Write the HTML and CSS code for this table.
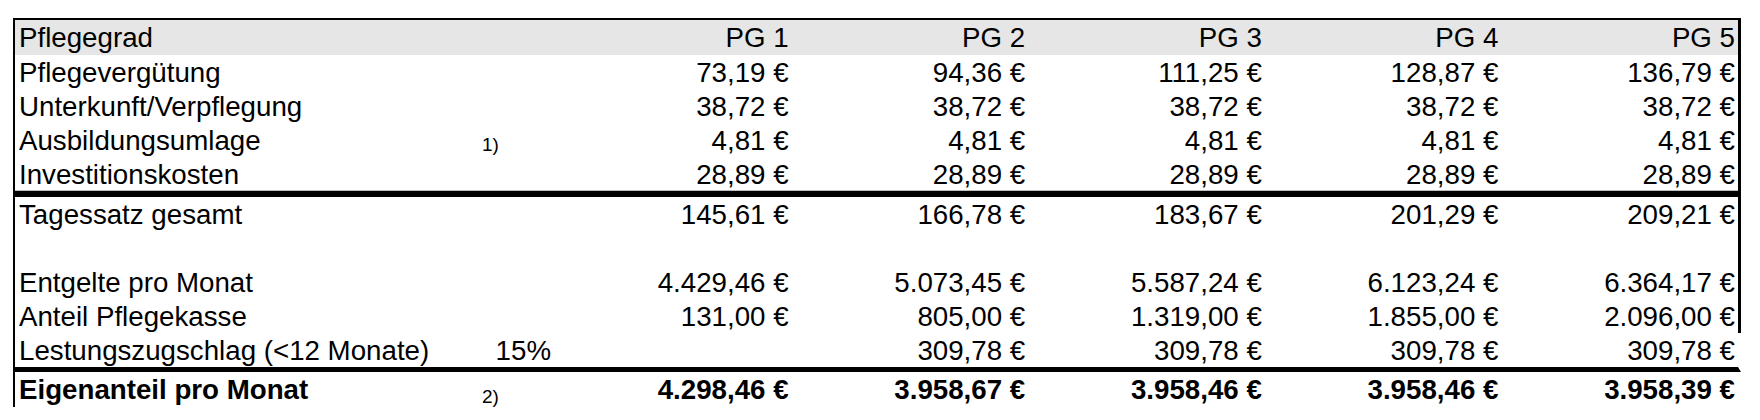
FILE: index.html
```html
<!DOCTYPE html>
<html lang="de">
<head>
<meta charset="utf-8">
<title>Pflegegrad Kosten</title>
<link rel="stylesheet" href="styles.css">
</head>
<body>
<div class="sheet">
  <div class="row head">
    <div class="label">Pflegegrad</div><div class="note"></div>
    <div class="num">PG 1</div><div class="num">PG 2</div><div class="num">PG 3</div><div class="num">PG 4</div><div class="num">PG 5</div>
  </div>
  <div class="row">
    <div class="label">Pflegevergütung</div><div class="note"></div>
    <div class="num">73,19&nbsp;€</div><div class="num">94,36&nbsp;€</div><div class="num">111,25&nbsp;€</div><div class="num">128,87&nbsp;€</div><div class="num">136,79&nbsp;€</div>
  </div>
  <div class="row">
    <div class="label">Unterkunft/Verpflegung</div><div class="note"></div>
    <div class="num">38,72&nbsp;€</div><div class="num">38,72&nbsp;€</div><div class="num">38,72&nbsp;€</div><div class="num">38,72&nbsp;€</div><div class="num">38,72&nbsp;€</div>
  </div>
  <div class="row">
    <div class="label">Ausbildungsumlage</div><div class="note small">1)</div>
    <div class="num">4,81&nbsp;€</div><div class="num">4,81&nbsp;€</div><div class="num">4,81&nbsp;€</div><div class="num">4,81&nbsp;€</div><div class="num">4,81&nbsp;€</div>
  </div>
  <div class="row thick">
    <div class="label">Investitionskosten</div><div class="note"></div>
    <div class="num">28,89&nbsp;€</div><div class="num">28,89&nbsp;€</div><div class="num">28,89&nbsp;€</div><div class="num">28,89&nbsp;€</div><div class="num">28,89&nbsp;€</div>
  </div>
  <div class="row">
    <div class="label">Tagessatz gesamt</div><div class="note"></div>
    <div class="num">145,61&nbsp;€</div><div class="num">166,78&nbsp;€</div><div class="num">183,67&nbsp;€</div><div class="num">201,29&nbsp;€</div><div class="num">209,21&nbsp;€</div>
  </div>
  <div class="row">
    <div class="label"></div><div class="note"></div>
    <div class="num"></div><div class="num"></div><div class="num"></div><div class="num"></div><div class="num"></div>
  </div>
  <div class="row">
    <div class="label">Entgelte pro Monat</div><div class="note"></div>
    <div class="num">4.429,46&nbsp;€</div><div class="num">5.073,45&nbsp;€</div><div class="num">5.587,24&nbsp;€</div><div class="num">6.123,24&nbsp;€</div><div class="num">6.364,17&nbsp;€</div>
  </div>
  <div class="row">
    <div class="label">Anteil Pflegekasse</div><div class="note"></div>
    <div class="num">131,00&nbsp;€</div><div class="num">805,00&nbsp;€</div><div class="num">1.319,00&nbsp;€</div><div class="num">1.855,00&nbsp;€</div><div class="num">2.096,00&nbsp;€</div>
  </div>
  <div class="row open thin-bottom">
    <div class="label">Lestungszugschlag (&lt;12 Monate)</div><div class="note pct">15%</div>
    <div class="num"></div><div class="num">309,78&nbsp;€</div><div class="num">309,78&nbsp;€</div><div class="num">309,78&nbsp;€</div><div class="num">309,78&nbsp;€</div>
  </div>
  <div class="row open total">
    <div class="label">Eigenanteil pro Monat</div><div class="note small low">2)</div>
    <div class="num">4.298,46&nbsp;€</div><div class="num">3.958,67&nbsp;€</div><div class="num">3.958,46&nbsp;€</div><div class="num">3.958,46&nbsp;€</div><div class="num">3.958,39&nbsp;€</div>
  </div>
</div>
</body>
</html>
```

FILE: styles.css
```css
html, body {
  margin: 0;
  padding: 0;
  background: #ffffff;
}

body {
  font-family: "Liberation Sans", Arial, sans-serif;
  font-size: 27.7px;
  color: #000000;
}

.sheet {
  margin: 18px 0 0 13px;
  width: 1726px;
  border-top: 2px solid #000;
  border-left: 2px solid #000;
}

.row {
  display: grid;
  grid-template-columns: 463px 77px repeat(5, 1fr);
  height: 34px;
  line-height: 34px;
  border-right: 3px solid #000;
  white-space: nowrap;
}

.row > div {
  padding-top: 1px;
}

.row.head {
  height: 35px;
  line-height: 35px;
  background: #e6e6e6;
}

.row.head > div {
  padding-top: 0;
}

.row.thick {
  border-bottom: 6px solid #000;
  box-shadow: inset 0 -1px 0 #bdbdbd;
}

.row.open {
  border-right-color: transparent;
}

.row.thin-bottom {
  border-bottom: 5px solid #000;
}

.row.total {
  height: 35px;
  font-weight: bold;
}

.label {
  padding-left: 4px;
}

.num {
  text-align: right;
  padding-right: 3px;
}

.note {
  padding-left: 4px;
}

.row > .note.small {
  font-size: 19px;
  font-weight: normal;
  padding-top: 5px;
}

.row > .note.small.low {
  padding-top: 8px;
}

.note.pct {
  text-align: right;
  padding-right: 4px;
}
```
